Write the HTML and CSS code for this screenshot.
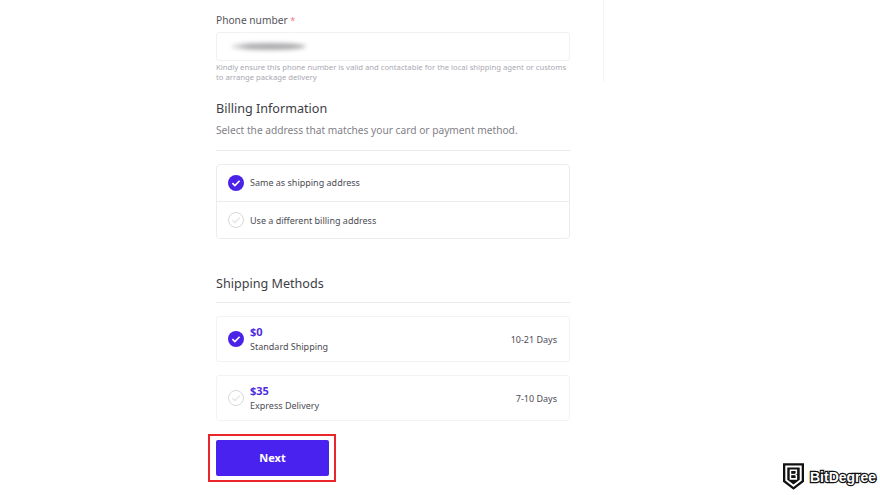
FILE: index.html
```html
<!DOCTYPE html>
<html lang="en">
<head>
<meta charset="utf-8">
<title>Checkout</title>
<link rel="stylesheet" href="styles.css">
</head>
<body>
<div class="vline"></div>
<main class="col">
  <div class="label">Phone number <span class="req">*</span></div>
  <div class="input"><div class="smudge"></div></div>
  <p class="help">Kindly ensure this phone number is valid and contactable for the local shipping agent or customs to arrange package delivery</p>
  <h2 class="h-billing">Billing Information</h2>
  <p class="sub">Select the address that matches your card or payment method.</p>
  <div class="rule rule-billing"></div>
  <div class="box">
    <div class="opt opt-first">
      <svg class="chk" viewBox="0 0 16 16"><circle cx="8" cy="8" r="8" fill="#4a22e8"/><path d="M4.4 8.2l2.5 2.4 4.7-4.9" fill="none" stroke="#fff" stroke-width="1.6"/></svg>
      <span>Same as shipping address</span>
    </div>
    <div class="opt">
      <svg class="chk" viewBox="0 0 16 16"><circle cx="8" cy="8" r="7.5" fill="#fff" stroke="#d8d8d8"/><path d="M4.4 8.2l2.5 2.4 4.7-4.9" fill="none" stroke="#e2e2e2" stroke-width="1.2"/></svg>
      <span>Use a different billing address</span>
    </div>
  </div>
  <h2 class="h-shipping">Shipping Methods</h2>
  <div class="rule rule-shipping"></div>
  <div class="card">
    <svg class="chk" viewBox="0 0 16 16"><circle cx="8" cy="8" r="8" fill="#4a22e8"/><path d="M4.4 8.2l2.5 2.4 4.7-4.9" fill="none" stroke="#fff" stroke-width="1.6"/></svg>
    <div class="info"><div class="price">$0</div><div class="name">Standard Shipping</div></div>
    <div class="days">10-21 Days</div>
  </div>
  <div class="card card-second">
    <svg class="chk" viewBox="0 0 16 16"><circle cx="8" cy="8" r="7.5" fill="#fff" stroke="#d8d8d8"/><path d="M4.4 8.2l2.5 2.4 4.7-4.9" fill="none" stroke="#e2e2e2" stroke-width="1.2"/></svg>
    <div class="info"><div class="price">$35</div><div class="name">Express Delivery</div></div>
    <div class="days">7-10 Days</div>
  </div>
  <div class="next-wrap"><button class="next">Next</button></div>
</main>
<div class="logo">
  <svg class="shield" viewBox="0 0 22 28"><path d="M1.2 1.2h19.6v17.6L11 26.4 1.2 18.8z" fill="#fff" stroke="#111" stroke-width="2.4"/><path d="M4.5 4.5h13v12.8L11 22.3l-6.5-5z" fill="#111"/><path d="M7.8 7.5h6.2v3.4l-1.2 1 1.2 1v3.6H7.8z" fill="none" stroke="#fff" stroke-width="1.6"/><path d="M7.8 11.9h4.6" stroke="#fff" stroke-width="1.4"/></svg>
  <span class="brand">BitDegree</span>
</div>
</body>
</html>
```
FILE: styles.css
```css
html, body { margin: 0; padding: 0; }
body {
  width: 880px;
  height: 495px;
  overflow: hidden;
  background: #fff;
  position: relative;
  font-family: "Noto Sans", "Open Sans", sans-serif;
  color: #3b3b45;
}
.vline {
  position: absolute;
  left: 603px;
  top: 0;
  width: 1px;
  height: 82px;
  background: #f4f4f6;
}
.col {
  width: 354px;
  margin-left: 216px;
  padding-top: 12px;
  display: flex;
  flex-direction: column;
}
.label { font-size: 10.2px; line-height: 16px; color: #55555c; }
.req { color: #ef7a7d; font-size: 9px; }
.input {
  height: 29px;
  margin-top: 3px;
  border: 1px solid #f1f1f3;
  border-radius: 3px;
  box-sizing: border-box;
  display: flex;
  align-items: center;
  padding-left: 14px;
}
.smudge {
  width: 75px;
  height: 7px;
  background: linear-gradient(90deg, #d8d8da 0%, #b0b0b3 25%, #a9a9ac 100%);
  border-radius: 50%;
  filter: blur(2px);
}
.help {
  margin: 1px 0 0;
  font-size: 7.7px;
  line-height: 10px;
  color: #a9a9b2;
}
h2 {
  margin: 0;
  font-weight: 400;
  font-size: 12.6px;
  line-height: 18px;
  color: #3d3d45;
}
.h-billing { margin-top: 18px; }
.sub {
  margin: 5px 0 0;
  font-size: 10.2px;
  line-height: 15px;
  color: #7f7f87;
}
.rule { height: 1px; background: #e9e9ec; }
.rule-billing { margin-top: 12px; }
.box {
  margin-top: 13px;
  height: 75px;
  box-sizing: border-box;
  border: 1px solid #ececef;
  border-radius: 4px;
  display: flex;
  flex-direction: column;
}
.opt {
  flex: 1;
  display: flex;
  align-items: center;
  gap: 6px;
  padding-left: 11px;
  font-size: 9px;
  color: #4c4c54;
}
.opt-first {
  flex: none;
  height: 37px;
  box-sizing: border-box;
  border-bottom: 1px solid #ececef;
  padding-bottom: 1px;
}
.chk { width: 16px; height: 16px; flex: none; }
.h-shipping { margin-top: 36px; }
.rule-shipping { margin-top: 9px; }
.card {
  margin-top: 13px;
  height: 46px;
  box-sizing: border-box;
  border: 1px solid #f3f3f5;
  border-radius: 3px;
  display: flex;
  align-items: center;
  gap: 6px;
  padding: 0 12px 0 11px;
}
.info { flex: 1; display: flex; flex-direction: column; }
.price { font-size: 11px; line-height: 15px; font-weight: 700; color: #4f2ce0; }
.name { font-size: 9px; line-height: 15px; color: #4c4c54; }
.days { font-size: 9px; color: #4c4c54; }
.next-wrap {
  margin-top: 13px;
  margin-left: -8px;
  width: 128px;
  height: 48px;
  box-sizing: border-box;
  border: 2px solid #e8262c;
  padding: 4px 5px 4px 6px;
}
.next {
  display: block;
  width: 113px;
  height: 36px;
  border: 0;
  border-radius: 2px;
  background: #4a22f0;
  color: #fff;
  font-family: inherit;
  font-size: 11px;
  font-weight: 700;
  padding: 0 0 1px;
}
.logo {
  position: absolute;
  left: 783px;
  top: 463px;
  display: flex;
  align-items: center;
  gap: 6px;
}
.shield { width: 21px; height: 27px; display: block; }
.brand {
  font-family: "Liberation Sans", sans-serif;
  font-size: 14px;
  line-height: 20px;
  font-weight: 700;
  color: #fff;
  -webkit-text-stroke: 2.4px #111;
  paint-order: stroke fill;
}
```
